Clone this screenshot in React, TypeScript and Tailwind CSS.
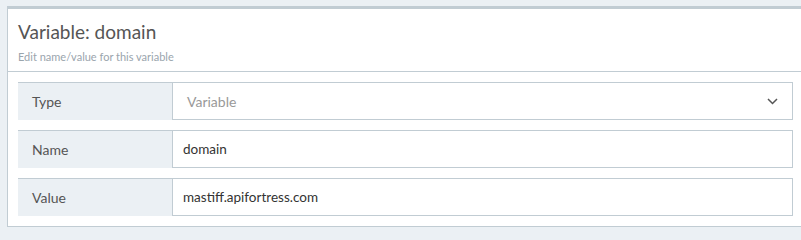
import React from "react";

const font = { fontFamily: "Lato, 'Open Sans', sans-serif" };

function Row({ label, pad, children }: { label: string; pad: string; children: React.ReactNode }) {
  return (
    <div className="flex h-[38px]">
      <div className="w-[154px] shrink-0 bg-[#ebf0f4] border-t border-[#c1ccd3] pl-[14px] flex items-center text-[14px] text-[#555]">
        {label}
      </div>
      <div className={`flex-1 border border-[#c1ccd3] bg-white pr-[14px] flex items-center text-[13.5px] ${pad}`}>
        {children}
      </div>
    </div>
  );
}

export default function App() {
  return (
    <div className="w-[801px] h-[240px] overflow-hidden bg-[#ebf0f4] pt-[6px] pl-[7px]" style={font}>
      <div className="w-[805px] bg-white border-l border-b border-t-[3px] border-[#c1ccd3]">
        <div className="border-b border-[#c1ccd3] pl-[10px] pt-[10px] h-[63px]">
          <div className="text-[19px] leading-[25px] text-[#555]">Variable: domain</div>
          <div className="text-[11px] leading-[14px] mt-[6px] text-[#9aa5ad]">Edit name/value for this variable</div>
        </div>
        <div className="pl-[10px] pt-[10px] pb-[10px] w-[785px] flex flex-col gap-[10px]">
          <Row label="Type" pad="pl-[14px]">
            <span className="flex-1 text-[14px] text-[#999]">Variable</span>
            <svg width="11" height="7" viewBox="0 0 11 7">
              <path d="M1 1 L5.5 5.5 L10 1" fill="none" stroke="#555" strokeWidth="1.5" />
            </svg>
          </Row>
          <Row label="Name" pad="pl-[10px]">
            <span className="text-[#333]">domain</span>
          </Row>
          <Row label="Value" pad="pl-[10px]">
            <span className="text-[#333]">mastiff.apifortress.com</span>
          </Row>
        </div>
      </div>
    </div>
  );
}
